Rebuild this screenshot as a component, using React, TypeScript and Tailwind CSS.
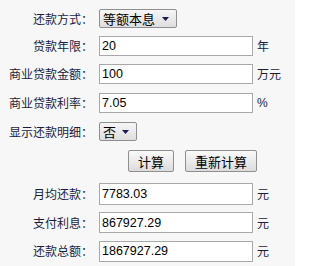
import type { ReactNode } from "react";

const labelCls =
  "w-[93px] shrink-0 text-right text-[12px] leading-none text-[#1c1c3c] [font-family:'Noto_Sans_CJK_SC',sans-serif]";
const cjk = "[font-family:'Noto_Sans_CJK_SC',sans-serif]";

function Row({ label, h, children }: { label: string; h: string; children: ReactNode }) {
  return (
    <div className={`flex items-center ${h}`}>
      <div className={labelCls}>{label}</div>
      <div className="ml-[6px] flex items-center">{children}</div>
    </div>
  );
}

function Field({ value, height = "h-[20px]" }: { value: string; height?: string }) {
  return (
    <input
      readOnly
      value={value}
      className={`${height} w-[154px] border border-[#a9a9a9] bg-white px-[2px] text-[12.5px] text-black outline-none [font-family:'Liberation_Sans',Arial,sans-serif]`}
    />
  );
}

function Unit({ children }: { children: ReactNode }) {
  return (
    <span className={`ml-[4px] text-[12px] text-[#1c1c3c] ${cjk}`}>{children}</span>
  );
}

function Select({ value, width }: { value: string; width: string }) {
  return (
    <div
      className={`flex h-[19px] ${width} items-center justify-between rounded-[2px] border border-[#8f8f8f] bg-gradient-to-b from-[#f6f6f6] to-[#dedede] pl-[3px] pr-[7px] text-[13px] leading-none text-black ${cjk}`}
    >
      <span>{value}</span>
      <svg width="7" height="4" viewBox="0 0 7 4">
        <path d="M0 0h7L3.5 4z" fill="#1a1a5a" />
      </svg>
    </div>
  );
}

function Button({ children, width }: { children: ReactNode; width: string }) {
  return (
    <button
      className={`flex h-[22px] ${width} items-center justify-center rounded-[2px] border border-[#8f8f8f] bg-gradient-to-b from-[#fafafa] to-[#dcdcdc] text-[13px] leading-none text-black ${cjk}`}
    >
      {children}
    </button>
  );
}

export default function App() {
  return (
    <div className="h-[266px] w-[295px] bg-[#f7f7f7] pt-[5px]">
      <Row label="还款方式：" h="h-[27px]">
        <Select value="等额本息" width="w-[78px]" />
      </Row>
      <Row label="贷款年限：" h="h-[28px]">
        <Field value="20" />
        <Unit>年</Unit>
      </Row>
      <Row label="商业贷款金额：" h="h-[28px]">
        <Field value="100" />
        <Unit>万元</Unit>
      </Row>
      <Row label="商业贷款利率：" h="h-[29px]">
        <Field value="7.05" />
        <Unit>
          <span className="text-[12px] [font-family:'Liberation_Sans',Arial,sans-serif]">%</span>
        </Unit>
      </Row>
      <Row label="显示还款明细：" h="h-[29px]">
        <Select value="否" width="w-[38px]" />
      </Row>
      <div className="flex h-[30px] items-center gap-[11px] pl-[128px]">
        <Button width="w-[46px]">计算</Button>
        <Button width="w-[72px]">重新计算</Button>
      </div>
      <div className="mt-[4px]">
        <Row label="月均还款：" h="h-[28px]">
          <Field value="7783.03" height="h-[22px]" />
          <Unit>元</Unit>
        </Row>
        <Row label="支付利息：" h="h-[29px]">
          <Field value="867927.29" height="h-[21px]" />
          <Unit>元</Unit>
        </Row>
        <Row label="还款总额：" h="h-[28px]">
          <Field value="1867927.29" height="h-[21px]" />
          <Unit>元</Unit>
        </Row>
      </div>
    </div>
  );
}
